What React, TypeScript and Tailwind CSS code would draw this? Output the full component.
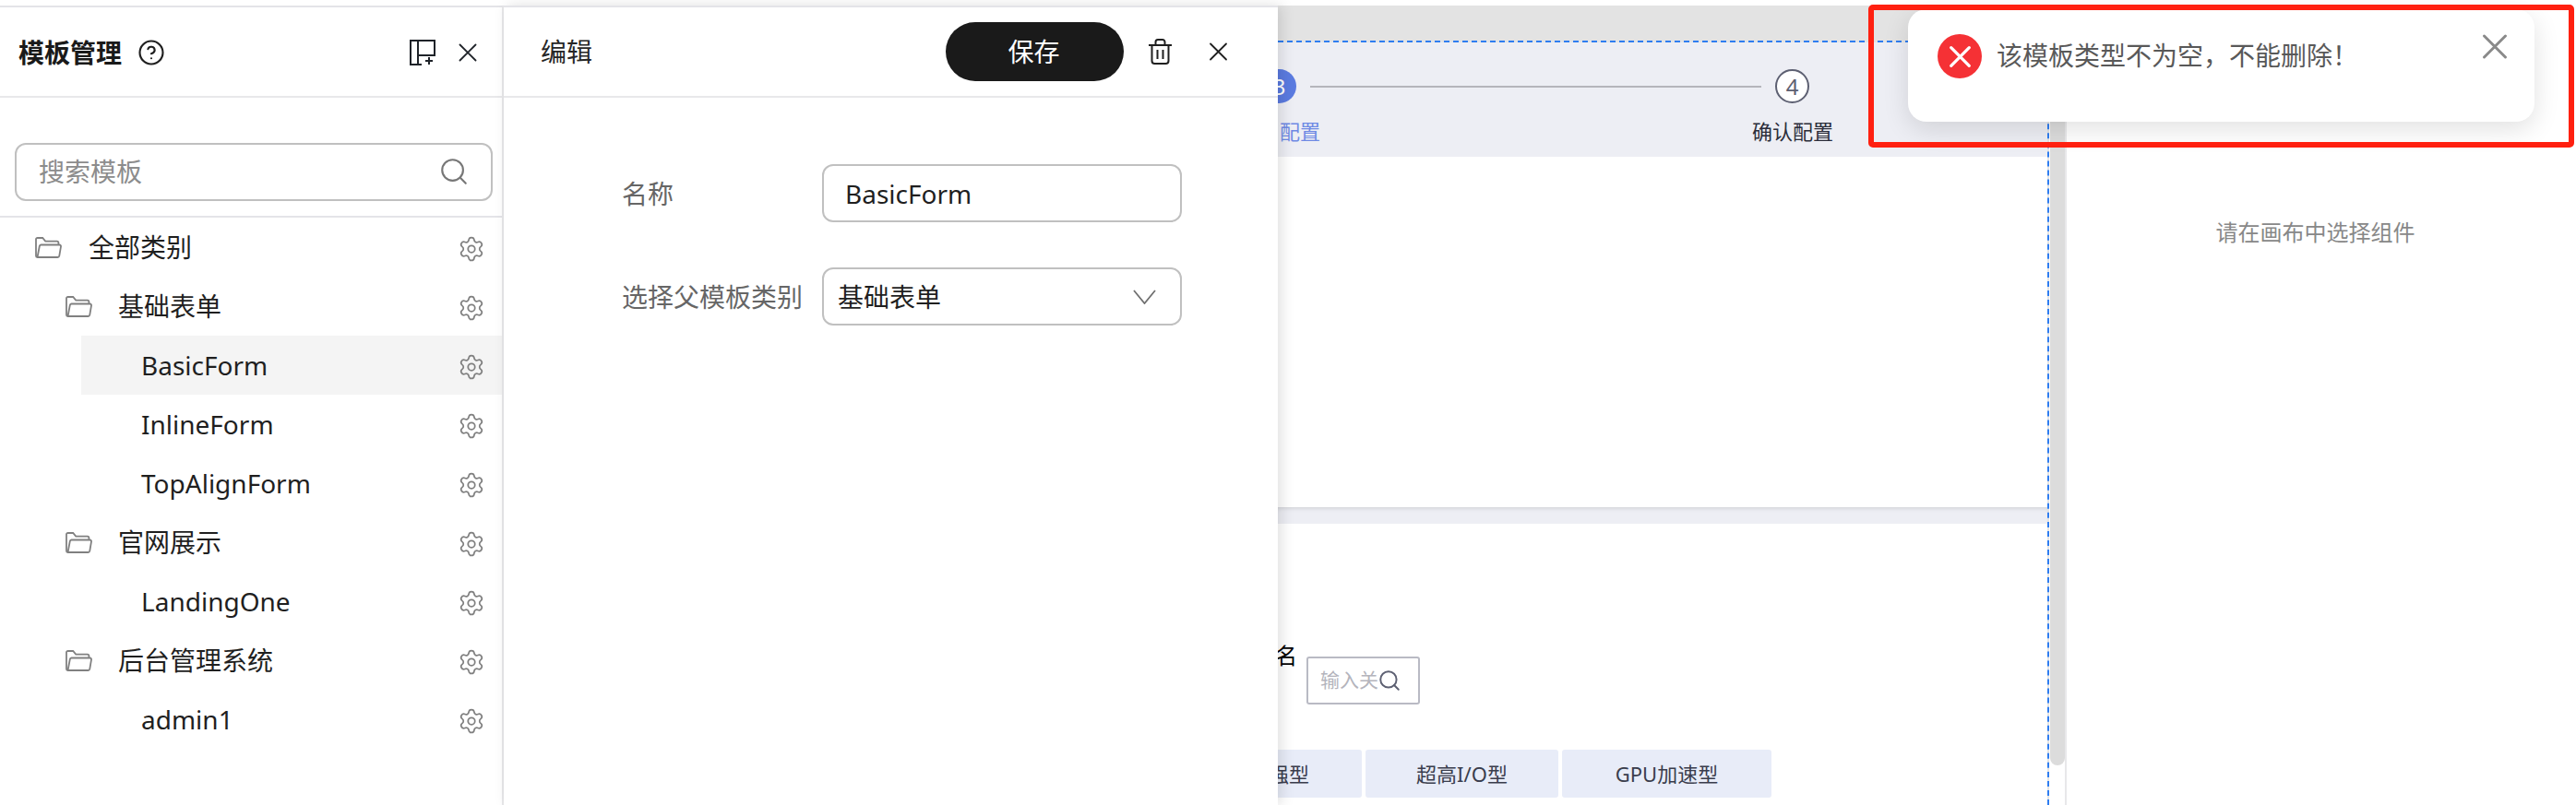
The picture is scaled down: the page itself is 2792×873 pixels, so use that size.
import { CircleHelp, Search, Settings } from "lucide-react";

type TreeRow = {
  label: string;
  level: 0 | 1 | 2;
  active?: boolean;
};

const treeRows: TreeRow[] = [
  { label: "全部类别", level: 0 },
  { label: "基础表单", level: 1 },
  { label: "BasicForm", level: 2, active: true },
  { label: "InlineForm", level: 2 },
  { label: "TopAlignForm", level: 2 },
  { label: "官网展示", level: 1 },
  { label: "LandingOne", level: 2 },
  { label: "后台管理系统", level: 1 },
  { label: "admin1", level: 2 },
];

function CloseIcon({ className, weight = 1.8 }: { className: string; weight?: number }) {
  return (
    <svg viewBox="0 0 20 20" fill="none" stroke="currentColor" strokeWidth={weight} strokeLinecap="round" className={className}>
      <path d="M1.5 1.5 18.5 18.5M18.5 1.5 1.5 18.5" />
    </svg>
  );
}

function FolderIcon() {
  return (
    <svg viewBox="0 0 29 23" fill="none" stroke="#808080" strokeWidth="1.8" className="h-[23px] w-[29px] shrink-0">
      <path d="M4 22H2.5A1.6 1.6 0 0 1 1 20.4V2.6A1.6 1.6 0 0 1 2.6 1h5.6l3 3.6h12.6a1.6 1.6 0 0 1 1.6 1.6v2.3" />
      <path d="M6.4 8.5H26.4a1.6 1.6 0 0 1 1.6 1.9l-1.7 10a1.9 1.9 0 0 1-1.9 1.6H4a1.2 1.2 0 0 1-1.2-1.4L4.8 10a1.9 1.9 0 0 1 1.6-1.5Z" />
    </svg>
  );
}

function AddLayoutIcon() {
  return (
    <svg viewBox="0 0 28 28" fill="none" stroke="#1f2329" strokeWidth="2" className="h-7 w-7">
      <path d="M13 27H1V1h26v16H9M9 1v26M21 19v8M17 23h8" />
    </svg>
  );
}

function TrashIcon() {
  return (
    <svg viewBox="0 0 25 28" fill="none" stroke="#1f1f1f" strokeWidth="2" className="h-7 w-[25px]">
      <path d="M0 7h25M7.5 7V3.5A2.5 2.5 0 0 1 10 1h5a2.5 2.5 0 0 1 2.5 2.5V7M3.5 7v17A3 3 0 0 0 6.5 27h12a3 3 0 0 0 3-3V7M9.5 12v10M15.5 12v10" />
    </svg>
  );
}

function Sidebar() {
  return (
    <aside className="w-[546px] shrink-0 border-r-2 border-t-2 border-r-[#e8e8ea] border-t-[#e4e4e8] bg-white">
      <div className="flex h-[98px] items-center border-b-2 border-[#e8e8ea] pl-5 pr-[27px] pt-[2px]">
        <h2 className="text-[28px] font-bold text-[#1a1a1a]">模板管理</h2>
        <CircleHelp size={30} strokeWidth={1.7} className="ml-[17px] text-[#1f1f1f]" />
        <div className="ml-auto flex items-center gap-[25px]">
          <div className="-ml-[1px]">
            <AddLayoutIcon />
          </div>
          <CloseIcon className="h-5 w-5 text-[#1f2329]" />
        </div>
      </div>
      <div className="flex h-[130px] items-end border-b-2 border-[#e4e4e8] pb-[16px] pl-[16px] pr-[10px]">
        <div className="flex h-[63px] flex-1 items-center rounded-[12px] border-2 border-[#c0c0c0] pb-[2px] pl-6 pr-[23px]">
          <input
            placeholder="搜索模板"
            className="min-w-0 flex-1 bg-transparent text-[28px] outline-none placeholder:text-[#8c8c8c]"
          />
          <Search size={34} strokeWidth={1.5} className="text-[#777777]" />
        </div>
      </div>
      <div>
        {treeRows.map((row) => (
          <div
            key={row.label}
            className={`flex h-16 items-center pr-[18px] text-[28px] text-[#1f1f1f] ${
              row.level === 2 ? "ml-[88px] pl-[65px]" : row.level === 1 ? "pl-[71px]" : "pl-[38px]"
            } ${row.active ? "bg-[#f4f4f4]" : ""}`}
          >
            {row.level < 2 && <FolderIcon />}
            <span className={row.level === 1 ? "ml-[28px]" : row.level === 0 ? "ml-[29px]" : ""}>{row.label}</span>
            <Settings size={30} strokeWidth={1.4} className="ml-auto mt-[3px] text-[#808080]" />
          </div>
        ))}
      </div>
    </aside>
  );
}

function Editor() {
  return (
    <section className="relative z-10 w-[839px] shrink-0 border-t-2 border-[#e4e4e8] bg-white shadow-[4px_0_14px_rgba(0,0,0,0.12)]">
      <div className="flex h-[98px] items-center border-b-2 border-[#e8e8ea] pl-[40px] pr-[54px]">
        <span className="text-[28px] text-[#262626]">编辑</span>
        <button className="ml-auto flex h-16 w-[193px] items-center justify-center rounded-full bg-[#1a1a1a] text-[28px] text-white">
          <span className="-ml-[2px]">保存</span>
        </button>
        <div className="ml-[27px]">
          <TrashIcon />
        </div>
        <CloseIcon className="ml-[40px] h-5 w-[21px] text-[#1f1f1f]" />
      </div>
      <div className="pl-[128px] pt-[72px]">
        <div className="flex items-center">
          <label className="w-[217px] text-[28px] text-[#666666]">名称</label>
          <input
            defaultValue="BasicForm"
            className="h-[63px] w-[390px] rounded-[12px] border-2 border-[#c0c0c0] pl-[23px] pr-6 text-[28px] text-[#1f1f1f] outline-none"
          />
        </div>
        <div className="mt-[49px] flex items-center">
          <label className="w-[217px] whitespace-nowrap text-[28px] text-[#666666]">选择父模板类别</label>
          <div className="flex h-[63px] w-[390px] items-center justify-between rounded-[12px] border-2 border-[#c0c0c0] pl-[15px] pr-[26px] text-[28px] text-[#1f1f1f]">
            <span>基础表单</span>
            <svg viewBox="0 0 25 16" fill="none" stroke="#707070" strokeWidth="1.8" className="h-4 w-[25px]">
              <path d="M1 1 12.5 15 24 1" />
            </svg>
          </div>
        </div>
      </div>
    </section>
  );
}

function Canvas() {
  return (
    <main className="flex w-[853px] shrink-0 overflow-hidden">
      <div className="w-[836px] shrink-0 bg-[#e3e3e3] pt-[38px]">
        <div className="h-full border-r-2 border-t-2 border-dashed border-[#2f7df0]">
          <div className="h-[124px] bg-[#edeef4]">
            <div className="flex h-[66px] items-end">
              <div className="-ml-[17px] flex h-[37px] w-[37px] shrink-0 items-center justify-center rounded-full bg-[#5b7be0] text-[24px] text-white">
                3
              </div>
              <div className="mb-[17px] ml-[15px] h-[2px] w-[489px] bg-[#b5b5bb]" />
              <div className="ml-[15px] flex h-[37px] w-[37px] items-center justify-center rounded-full border-2 border-[#5d6072] bg-white text-[24px] text-[#5d6072]">
                4
              </div>
            </div>
            <div className="mt-[15px] flex text-[22px] leading-[30px]">
              <span className="ml-[2px] text-[#6f8ae4]">配置</span>
              <span className="ml-[468px] text-[#2b2d3a]">确认配置</span>
            </div>
          </div>
          <div className="h-[380px] bg-white" />
          <div className="h-[18px] bg-[#edeef4] shadow-[inset_0_4px_5px_-3px_rgba(0,0,0,0.14)]" />
          <div className="h-[345px] bg-white">
            <div className="flex pt-[132px]">
              <span className="-ml-[3px] font-['Liberation_Serif','Noto_Sans_CJK_SC',serif] text-[24px] leading-[24px] text-black">名</span>
              <div className="ml-[10px] mt-[12px] flex h-[52px] w-[123px] items-center rounded-[3px] border-2 border-[#b9bac4] pl-[13px]">
                <span className="whitespace-nowrap text-[21px] text-[#b4b4bc]">输入关</span>
                <Search size={26} strokeWidth={1.8} className="-ml-[1px] text-[#5d6072]" />
              </div>
            </div>
            <div className="mt-[49px] flex gap-1 text-[22px] text-[#3a3d4d]">
              <div className="flex h-[52px] w-[91px] items-center overflow-hidden rounded-r-[3px] bg-[#e8ecf8]">
                <span className="-ml-[10px]">强型</span>
              </div>
              <div className="flex h-[52px] w-[209px] items-center justify-center rounded-[3px] bg-[#e8ecf8]">超高I/O型</div>
              <div className="flex h-[52px] w-[227px] items-center justify-center rounded-[3px] bg-[#e8ecf8]">GPU加速型</div>
            </div>
          </div>
        </div>
      </div>
      <div className="flex-1 bg-white pl-[1px]">
        <div className="h-[824px] w-4 rounded-b-full bg-[#dcdcdc]" />
      </div>
    </main>
  );
}

function PropertyPanel() {
  return (
    <aside className="flex-1 border-l-2 border-[#e8e8ea] bg-white pr-[13px] pt-[228px] text-center text-[24px] text-[#888888]">
      请在画布中选择组件
    </aside>
  );
}

export default function App() {
  return (
    <div className="relative h-[873px] w-[2792px] overflow-hidden bg-white pt-[6px] font-['Noto_Sans','Noto_Sans_CJK_SC',sans-serif]">
      <div className="flex h-[867px]">
        <Sidebar />
        <Editor />
        <Canvas />
        <PropertyPanel />
      </div>

      {/* toast and the red annotation box sit over the page */}
      <div className="absolute left-[2068px] top-[10px] z-20 flex h-[122px] w-[679px] items-start rounded-[20px] bg-white pl-[32px] pt-[27px] shadow-[0_8px_28px_rgba(0,0,0,0.12)]">
        <div className="flex h-12 w-12 items-center justify-center rounded-full bg-[#f53135]">
          <CloseIcon className="h-[23px] w-[23px] text-white" weight={2.8} />
        </div>
        <span className="ml-4 mt-[2px] text-[28px] text-[#595959]">该模板类型不为空，不能删除！</span>
        <CloseIcon className="absolute left-[622px] top-[27px] h-[27px] w-7 text-[#8a8a8a]" weight={2.2} />
      </div>
      <div className="absolute left-[2025px] top-[5px] z-30 h-[155px] w-[765px] rounded-[5px] border-[6px] border-[#ff2010]" />
    </div>
  );
}
